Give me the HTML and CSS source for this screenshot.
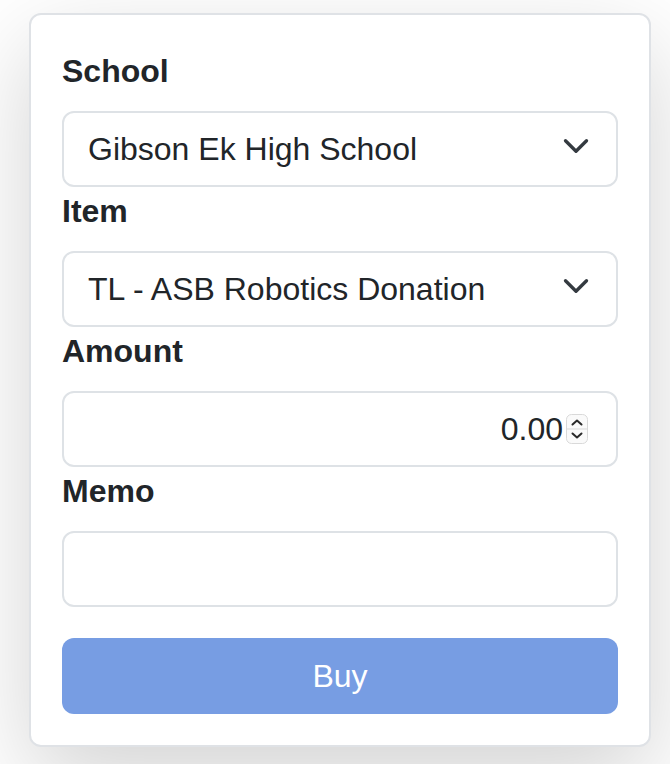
FILE: index.html
```html
<!DOCTYPE html>
<html>
<head>
  <meta charset="UTF-8">
  <title>Buy</title>
  <link rel="stylesheet" href="styles.css">
</head>
<body>

  <div class="page">
    <form class="card">
      <!-- School -->
      <label class="form-label" for="school">School</label>
      <div class="select-wrap">
        <select id="school" class="form-select">
          <option>Gibson Ek High School</option>
        </select>
        <svg class="chevron" viewBox="0 0 16 16"><path d="m2 5 6 6 6-6" fill="none" stroke="#343a40" stroke-width="1.9" stroke-linecap="round" stroke-linejoin="round"/></svg>
      </div>

      <!-- Item -->
      <label class="form-label" for="item">Item</label>
      <div class="select-wrap">
        <select id="item" class="form-select">
          <option>TL - ASB Robotics Donation</option>
        </select>
        <svg class="chevron" viewBox="0 0 16 16"><path d="m2 5 6 6 6-6" fill="none" stroke="#343a40" stroke-width="1.9" stroke-linecap="round" stroke-linejoin="round"/></svg>
      </div>

      <!-- Amount -->
      <label class="form-label" for="amount">Amount</label>
      <div class="number-field">
        <input type="text" id="amount" class="number-input" value="0.00">
        <svg class="spinner" viewBox="0 0 22 30">
          <rect x="0.5" y="0.5" width="21" height="29" rx="5" fill="#fafafa" stroke="#d9d9d9"/>
          <line x1="1" y1="15" x2="21" y2="15" stroke="#d9d9d9"/>
          <path d="M6.5 10.5 11 6.5 15.5 10.5" fill="none" stroke="#2a2a2a" stroke-width="2" stroke-linecap="round" stroke-linejoin="round"/>
          <path d="M6.5 19.5 11 23.5 15.5 19.5" fill="none" stroke="#2a2a2a" stroke-width="2" stroke-linecap="round" stroke-linejoin="round"/>
        </svg>
      </div>

      <!-- Memo -->
      <label class="form-label" for="memo">Memo</label>
      <input type="text" id="memo" class="form-control">

      <button type="button" class="btn-buy" disabled>Buy</button>
    </form>
  </div>

</body>
</html>
```

FILE: styles.css
```css
body {
  margin: 0;
  background: #fff;
  font-family: "Liberation Sans", Arial, sans-serif;
  color: #212529;
}
.page {
  padding: 13px 19px 18px 29px;
}
.card {
  display: flex;
  flex-direction: column;
  border: 2px solid #dfe2e6;
  border-radius: 12px;
  background: #fff;
  padding: 32px 31px 31px 31px;
  box-shadow: 0 32px 96px rgba(0, 0, 0, 0.175);
}
.form-label {
  display: block;
  font-size: 32px;
  font-weight: bold;
  line-height: 48px;
  margin-bottom: 16px;
}
.select-wrap {
  position: relative;
}
.form-select,
.form-control,
.number-field {
  box-sizing: border-box;
  width: 100%;
  height: 76px;
  border: 2px solid #dee2e6;
  border-radius: 12px;
  background: #fff;
  font-family: inherit;
  font-size: 32px;
  color: #212529;
}
.form-select {
  appearance: none;
  -webkit-appearance: none;
  padding: 0 72px 0 24px;
  display: block;
}
.chevron {
  position: absolute;
  right: 28px;
  top: 21px;
  width: 28px;
  height: 28px;
  pointer-events: none;
}
.form-control {
  padding: 0 24px;
}
.number-field {
  display: flex;
  align-items: center;
  padding: 0 28px 0 24px;
}
.number-input {
  flex: 1;
  min-width: 0;
  border: none;
  outline: none;
  padding: 0;
  font-family: inherit;
  font-size: 32px;
  color: #212529;
  text-align: right;
  background: transparent;
}
.spinner {
  width: 22px;
  height: 30px;
  margin-left: 3px;
}
.btn-buy {
  margin-top: 31px;
  height: 76px;
  width: 100%;
  border: none;
  border-radius: 12px;
  background-color: #779de3;
  color: #fff;
  font-family: inherit;
  font-size: 32px;
}
```
